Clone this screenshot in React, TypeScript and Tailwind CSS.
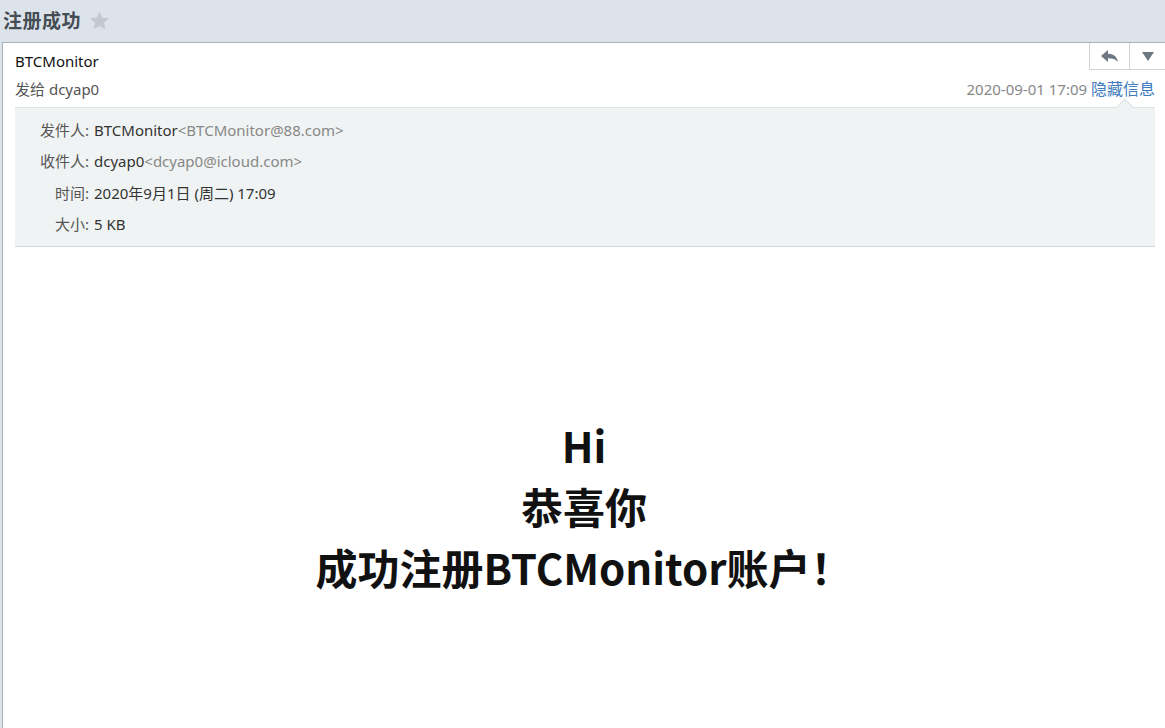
import React from 'react';

const font = { fontFamily: '"Noto Sans", "Noto Sans CJK SC", sans-serif' };

const rows = [
  { label: '发件人:', name: 'BTCMonitor', addr: '<BTCMonitor@88.com>' },
  { label: '收件人:', name: 'dcyap0', addr: '<dcyap0@icloud.com>' },
  { label: '时间:', name: '2020年9月1日 (周二) 17:09', addr: '' },
  { label: '大小:', name: '5 KB', addr: '' },
];

const App: React.FC = () => {
  return (
    <div className="w-[1165px] h-[728px] overflow-hidden bg-[#dde3ea] flex flex-col" style={font}>
      {/* title bar */}
      <div className="h-[42px] flex items-center pl-[3px] gap-[7px] shrink-0">
        <span className="text-[19px] font-bold text-[#454d55] tracking-[0.5px]">注册成功</span>
        <svg width="23" height="22" viewBox="0 0 24 24" className="mt-[-1px]">
          <path d="M12 1.5l3.1 7 7.4.6-5.6 4.9 1.7 7.4L12 17.5l-6.6 3.9 1.7-7.4-5.6-4.9 7.4-.6z" fill="#c3c9cf" />
        </svg>
      </div>

      {/* mail panel */}
      <div className="flex-1 ml-[2px] bg-white border-l border-t border-[#a8b1ba] flex flex-col relative">
        <div className="absolute right-0 top-0 flex border-l border-b border-[#cfd4d8] h-[27px]">
          <button className="w-[40px] flex items-center justify-center border-r border-[#cfd4d8]">
            <svg width="20" height="14" viewBox="0 0 20 14">
              <path d="M8 1L1 7l7 6V9.2c4.5 0 7.6 1 10 3.8C17 7.5 13.5 5 8 4.8z" fill="#6e7882" />
            </svg>
          </button>
          <button className="w-[35px] flex items-center justify-center">
            <svg width="12" height="9" viewBox="0 0 12 9">
              <path d="M0 0h12L6 9z" fill="#6e7882" />
            </svg>
          </button>
        </div>

        <div className="px-[12px] pt-[8px]">
          <div className="text-[15px] text-[#111] leading-[20px]">BTCMonitor</div>
          <div className="flex justify-between items-center mt-[8px] text-[15px] leading-[20px]">
            <span className="text-[#555]">发给 dcyap0</span>
            <span className="mr-[-2px]">
              <span className="text-[#888]">2020-09-01 17:09 </span>
              <span className="text-[#3f7bbd] text-[16px]">隐藏信息</span>
            </span>
          </div>
        </div>

        <div className="relative ml-[12px] mr-[10px] mt-[8px] bg-[#f0f3f3] border-t border-[#dde3e3] border-b border-b-[#d3d7d7] pt-[12px] pb-[1px]">
          <div className="absolute top-[-7px] right-[24px] w-[12px] h-[12px] rotate-45 bg-[#f0f3f3] border-l border-t border-[#dde3e3]" />
          {rows.map((r) => (
            <div key={r.label} className="flex text-[15px] leading-[20px] h-[31.3px]">
              <span className="w-[79px] text-right text-[#555] pr-[5px]">{r.label}</span>
              <span className="text-[#333]">{r.name}</span>
              <span className="text-[#888]">{r.addr}</span>
            </div>
          ))}
        </div>

        <div className="flex-1 flex flex-col items-center justify-center pt-[36px]">
          <div className="text-[42px] font-bold text-[#111] leading-[61px] text-center" style={{ fontFamily: '"Noto Sans CJK SC", "Noto Sans", sans-serif' }}>
            <div>Hi</div>
            <div>恭喜你</div>
            <div>成功注册BTCMonitor账户！</div>
          </div>
        </div>
      </div>
    </div>
  );
};

export default App;
